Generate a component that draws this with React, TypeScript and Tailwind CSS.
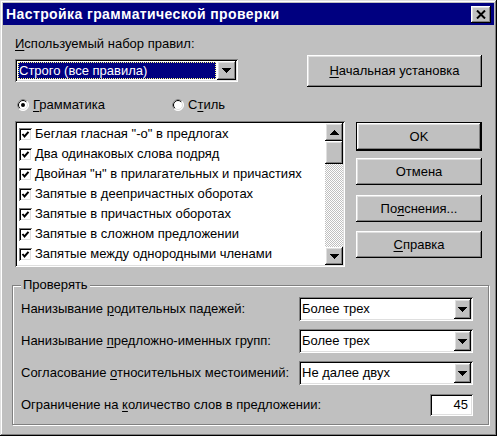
import React from "react";

const raised =
  "bg-[#c0c0c0] shadow-[inset_-1px_-1px_#000,inset_1px_1px_#fff,inset_-2px_-2px_#808080,inset_2px_2px_#dfdfdf]";
const sunken =
  "shadow-[inset_1px_1px_#808080,inset_-1px_-1px_#fff,inset_2px_2px_#000,inset_-2px_-2px_#dfdfdf]";

const RULES = [
  'Беглая гласная "-о" в предлогах',
  "Два одинаковых слова подряд",
  'Двойная "н" в прилагательных и причастиях',
  "Запятые в деепричастных оборотах",
  "Запятые в причастных оборотах",
  "Запятые в сложном предложении",
  "Запятые между однородными членами",
];

function Arrow({ dir = "down" }: { dir?: "down" | "up" }) {
  return (
    <svg width="9" height="5" viewBox="0 0 9 5" shapeRendering="crispEdges" className="block">
      <polygon points={dir === "down" ? "0,0 9,0 4.5,5" : "0,5 9,5 4.5,0"} fill="#000" />
    </svg>
  );
}

function U({ children }: { children: React.ReactNode }) {
  return <span className="underline underline-offset-2">{children}</span>;
}

function Check() {
  return (
    <div className={`w-[13px] h-[13px] bg-white shrink-0 flex items-center justify-center ${sunken}`}>
      <svg width="13" height="13" viewBox="0 0 13 13">
        <polyline points="3.5,6 5.5,8.5 9.5,3.8" fill="none" stroke="#000" strokeWidth="2" />
      </svg>
    </div>
  );
}

function Radio({ on }: { on?: boolean }) {
  return (
    <svg width="12" height="12" viewBox="0 0 12 12" className="block shrink-0">
      <circle cx="6" cy="6" r="5.5" fill="#fff" stroke="#fff" />
      <path d="M2.1 9.9 A5.5 5.5 0 0 1 9.9 2.1" fill="none" stroke="#808080" />
      <circle cx="6" cy="6" r="4.5" fill="#fff" stroke="#dfdfdf" />
      <path d="M2.8 9.2 A4.5 4.5 0 0 1 9.2 2.8" fill="none" stroke="#000" />
      {on && <circle cx="6" cy="6" r="2" fill="#000" />}
    </svg>
  );
}

function Btn({
  children,
  className = "",
  def,
}: {
  children: React.ReactNode;
  className?: string;
  def?: boolean;
}) {
  if (def) {
    return (
      <div className={`border border-black ${className}`}>
        <div className={`w-full h-full flex items-center justify-center ${raised}`}>{children}</div>
      </div>
    );
  }
  return <div className={`flex items-center justify-center ${raised} ${className}`}>{children}</div>;
}

function Select({ value }: { value: string }) {
  return (
    <div className={`w-[174px] h-[24px] bg-white p-[2px] flex ${sunken}`}>
      <div className="flex-1 flex items-center pl-[1px]">{value}</div>
      <div className={`w-[17px] h-full flex items-center justify-center ${raised}`}>
        <Arrow />
      </div>
    </div>
  );
}

export default function App() {
  return (
    <div className="w-[497px] h-[436px] bg-[#c0c0c0] p-[3px] flex flex-col text-[13px] leading-[16px] text-black font-['Liberation_Sans',Arial,sans-serif] shadow-[inset_-1px_-1px_#000,inset_1px_1px_#dfdfdf,inset_-2px_-2px_#808080,inset_2px_2px_#fff]">
      {/* title bar */}
      <div className="h-[22px] bg-[#000080] flex items-center justify-between pl-[3px] pr-[3px] shrink-0">
        <span className="text-white font-bold text-[14px] tracking-[0.4px]">
          Настройка грамматической проверки
        </span>
        <div className={`w-[20px] h-[17px] flex items-center justify-center ${raised}`}>
          <svg width="10" height="9" viewBox="0 0 10 9">
            <path d="M1 0.5 L9 8.5 M9 0.5 L1 8.5" stroke="#000" strokeWidth="2" />
          </svg>
        </div>
      </div>

      {/* rule set */}
      <div className="flex mt-[11px]">
        <div className="ml-[12px] w-[223px]">
          <div className="h-[16px] whitespace-nowrap">
            <U>И</U>спользуемый набор правил:
          </div>
          <div className={`mt-[7px] h-[23px] bg-white p-[2px] flex ${sunken}`}>
            <div className="flex-1 p-[1px]">
              <div className="h-full bg-[#000080] text-white flex items-center pl-[1px] outline outline-1 outline-dotted outline-[#ffff80] -outline-offset-1">
                Строго (все правила)
              </div>
            </div>
            <div className={`w-[19px] h-full flex items-center justify-center ${raised}`}>
              <Arrow />
            </div>
          </div>
        </div>
        <Btn className="ml-[69px] mt-[19px] w-[175px] h-[32px]">
          <span>
            <U>Н</U>ачальная установка
          </span>
        </Btn>
      </div>

      {/* radios */}
      <div className="flex items-center mt-[10px] h-[16px]">
        <div className="ml-[14px] flex items-center gap-[4px]">
          <Radio on />
          <span>
            <U>Г</U>рамматика
          </span>
        </div>
        <div className="ml-[67px] flex items-center gap-[4px]">
          <Radio />
          <span>
            С<U>т</U>иль
          </span>
        </div>
      </div>

      {/* list + buttons */}
      <div className="flex mt-[8px]">
        <div className={`ml-[12px] w-[330px] h-[146px] bg-white p-[2px] flex ${sunken}`}>
          <div className="flex-1 pt-[1px] overflow-hidden">
            {RULES.map((r) => (
              <div key={r} className="h-[20px] flex items-center pl-[2px] whitespace-nowrap">
                <Check />
                <span className="ml-[3px]">{r}</span>
              </div>
            ))}
          </div>
          <div className="w-[18px] flex flex-col">
            <div className={`h-[18px] flex items-center justify-center ${raised}`}>
              <Arrow dir="up" />
            </div>
            <div className={`h-[23px] ${raised}`} />
            <div className="flex-1 bg-[repeating-conic-gradient(#c0c0c0_0_25%,#fff_0_50%)] bg-[length:2px_2px]" />
            <div className={`h-[18px] flex items-center justify-center ${raised}`}>
              <Arrow />
            </div>
          </div>
        </div>
        <div className="ml-[11px] mt-[1px] w-[126px] flex flex-col">
          <Btn def className="h-[29px]">OK</Btn>
          <Btn className="mt-[7px] h-[27px]">Отмена</Btn>
          <Btn className="mt-[10px] h-[27px]">
            <span>
              По<U>я</U>снения...
            </span>
          </Btn>
          <Btn className="mt-[9px] h-[27px]">
            <span>
              <U>С</U>правка
            </span>
          </Btn>
        </div>
      </div>

      {/* group */}
      <div className="relative ml-[9px] mt-[18px] w-[477px] h-[140px] border border-[#808080] shadow-[inset_1px_1px_#fff,1px_1px_#fff] pl-[8px] pr-[15px] pt-[11px] flex flex-col gap-[8px]">
        <span className="absolute left-[8px] -top-[9px] bg-[#c0c0c0] px-[2px]">Проверять</span>
        <div className="h-[24px] flex items-center justify-between">
          <span>
            Нанизывание <U>р</U>одительных падежей:
          </span>
          <Select value="Более трех" />
        </div>
        <div className="h-[24px] flex items-center justify-between">
          <span>
            Нанизывание <U>п</U>редложно-именных групп:
          </span>
          <Select value="Более трех" />
        </div>
        <div className="h-[24px] flex items-center justify-between">
          <span>
            Согласование <U>о</U>тносительных местоимений:
          </span>
          <Select value="Не далее двух" />
        </div>
        <div className="h-[24px] flex items-center justify-between">
          <span>
            Ограничение на <U>к</U>оличество слов в предложении:
          </span>
          <div className={`w-[43px] h-[22px] bg-white flex items-center justify-end pr-[5px] ${sunken}`}>45</div>
        </div>
      </div>
    </div>
  );
}
